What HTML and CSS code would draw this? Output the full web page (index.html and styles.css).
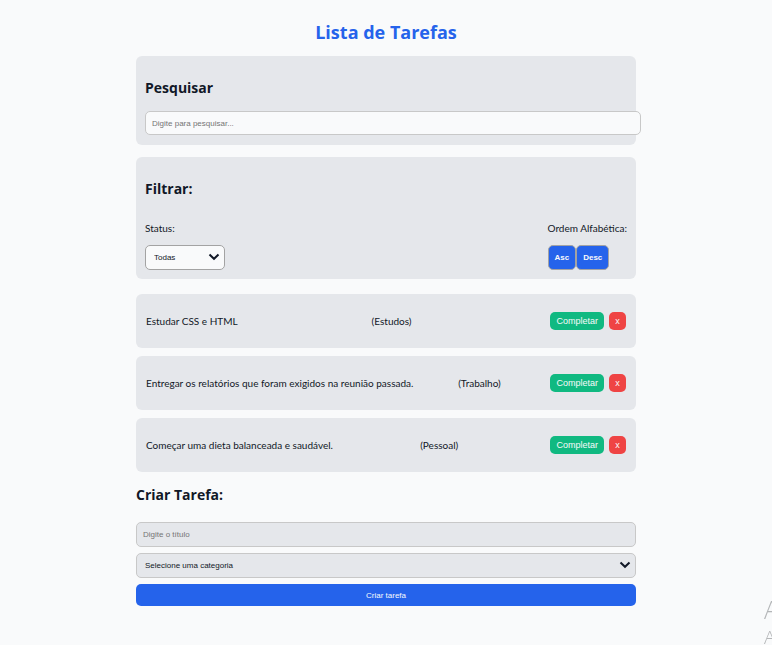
FILE: index.html
```html
<!DOCTYPE html>
<html lang="pt-BR">
<head>
<meta charset="utf-8">
<meta name="viewport" content="width=device-width, initial-scale=1">
<title>Lista de Tarefas</title>
<link rel="stylesheet" href="styles.css">
</head>
<body>
<main class="app">
  <h1 class="title">Lista de Tarefas</h1>

  <section class="card search">
    <h2 class="heading"><label for="search">Pesquisar</label></h2>
    <input class="field search-field" id="search" type="text" placeholder="Digite para pesquisar...">
  </section>

  <section class="card filter">
    <h2 class="heading">Filtrar:</h2>
    <div class="filter-options">
      <div class="option">
        <label for="status">Status:</label>
        <div class="select-wrap">
          <select class="field status-select" id="status">
            <option>Todas</option>
            <option>Completas</option>
            <option>Incompletas</option>
          </select>
          <svg class="chevron" viewBox="0 0 12 8" aria-hidden="true"><path d="M1.5 1.5 6 5.8 10.5 1.5"/></svg>
        </div>
      </div>
      <div class="option">
        <p class="option-name">Ordem Alfabética:</p>
        <div class="order-buttons">
          <button class="order" type="button">Asc</button>
          <button class="order" type="button">Desc</button>
        </div>
      </div>
    </div>
  </section>

  <ul class="tasks">
    <li class="task">
      <span>Estudar CSS e HTML</span>
      <span>(Estudos)</span>
      <div class="actions"><button class="complete" type="button">Completar</button><button class="remove" type="button">x</button></div>
    </li>
    <li class="task">
      <span>Entregar os relatórios que foram exigidos na reunião passada.</span>
      <span>(Trabalho)</span>
      <div class="actions"><button class="complete" type="button">Completar</button><button class="remove" type="button">x</button></div>
    </li>
    <li class="task">
      <span>Começar uma dieta balanceada e saudável.</span>
      <span>(Pessoal)</span>
      <div class="actions"><button class="complete" type="button">Completar</button><button class="remove" type="button">x</button></div>
    </li>
  </ul>

  <section class="create">
    <h2 class="heading">Criar Tarefa:</h2>
    <form class="create-form">
      <input class="field create-field" type="text" placeholder="Digite o título" aria-label="Título">
      <div class="select-wrap">
        <select class="field create-field create-select" aria-label="Categoria">
          <option>Selecione uma categoria</option>
          <option>Trabalho</option>
          <option>Pessoal</option>
          <option>Estudos</option>
        </select>
        <svg class="chevron" viewBox="0 0 12 8" aria-hidden="true"><path d="M1.5 1.5 6 5.8 10.5 1.5"/></svg>
      </div>
      <button class="submit" type="button">Criar tarefa</button>
    </form>
  </section>
</main>
<aside class="watermark"><p class="watermark-title">A</p><p class="watermark-text">A</p></aside>
</body>
</html>
```

FILE: styles.css
```css
* {
  box-sizing: border-box;
}

body {
  margin: 0;
  min-height: 100vh;
  background: #f9fafb;
  color: #111827;
  font-family: "Segoe UI", Lato, "Noto Sans", sans-serif;
  font-size: 10px;
  line-height: 14px;
  overflow-x: hidden;
}

button,
input,
select {
  margin: 0;
  font-family: Arial, "Liberation Sans", sans-serif;
  font-size: 8px;
}

.app {
  max-width: 500px;
  margin: 0 auto;
  padding: 20px 0;
}

.title,
.heading,
.watermark {
  font-family: "Segoe UI", "Open Sans", "Noto Sans", sans-serif;
}

.title {
  margin: 0 0 12px;
  color: #2563eb;
  font-size: 18px;
  line-height: 24px;
  text-align: center;
}

.card {
  margin-bottom: 12px;
  padding: 21px 9px 10px;
  border-radius: 6px;
  background: #e5e7eb;
}

.heading {
  margin: 0;
  font-size: 14px;
  line-height: 22px;
}

.field {
  height: 24px;
  padding: 0 6px;
  border: 1px solid #c8c8c8;
  border-radius: 5px;
  background: #f9fafb;
  color: #111827;
  outline: none;
}

.field::placeholder {
  color: #757575;
}

.search-field {
  box-sizing: content-box;
  display: block;
  width: 100%;
  height: 22px;
  margin-top: 12px;
}

.filter {
  margin-bottom: 15px;
  padding-bottom: 9px;
}

.filter-options {
  display: flex;
  justify-content: space-between;
  margin-top: 21px;
}

.option {
  display: flex;
  flex-direction: column;
  gap: 10px;
}

.option-name {
  margin: 0;
}

.select-wrap {
  position: relative;
  display: flex;
}

.select-wrap select {
  appearance: none;
  width: 100%;
  height: 25px;
  padding: 0 20px 0 8px;
}

.select-wrap .status-select {
  width: 80px;
  border-color: #a3a3a3;
}

.chevron {
  position: absolute;
  top: 8px;
  right: 5px;
  width: 12px;
  height: 8px;
  fill: none;
  stroke: #111827;
  stroke-width: 2;
  pointer-events: none;
}

.order-buttons {
  display: flex;
}

.order {
  height: 25px;
  padding: 0 6px;
  border: 1px solid #a3a3a3;
  border-radius: 5px;
  background: #2563eb;
  color: #f9fafb;
  font-weight: bold;
}

.tasks {
  display: grid;
  gap: 8px;
  margin: 0 0 12px;
  padding: 0;
  list-style: none;
}

.task {
  display: flex;
  justify-content: space-between;
  align-items: center;
  min-height: 54px;
  padding: 0 10px;
  border-radius: 6px;
  background: #e5e7eb;
}

.actions {
  display: flex;
}

.actions button {
  height: 18px;
  margin-left: 5px;
  padding: 0 6px;
  border: 0;
  border-radius: 5px;
  color: #f9fafb;
  font-size: 9px;
}

.actions .complete {
  background: #10b981;
}

.actions .remove {
  min-width: 17px;
  background: #ef4444;
}

.create-form {
  display: grid;
  gap: 6px;
  margin-top: 16px;
}

.create-field {
  height: 25px;
  background: #e5e7eb;
}

.submit {
  height: 22px;
  border: 0;
  border-radius: 5px;
  background: #2563eb;
  color: #f9fafb;
}

.watermark {
  position: fixed;
  right: -7px;
  bottom: -5px;
  color: #b4b6b8;
  font-weight: 300;
  pointer-events: none;
}

.watermark p {
  margin: 0;
}

.watermark-title {
  font-size: 25px;
  line-height: 30px;
}

.watermark-text {
  font-size: 19px;
  line-height: 26px;
}
```
